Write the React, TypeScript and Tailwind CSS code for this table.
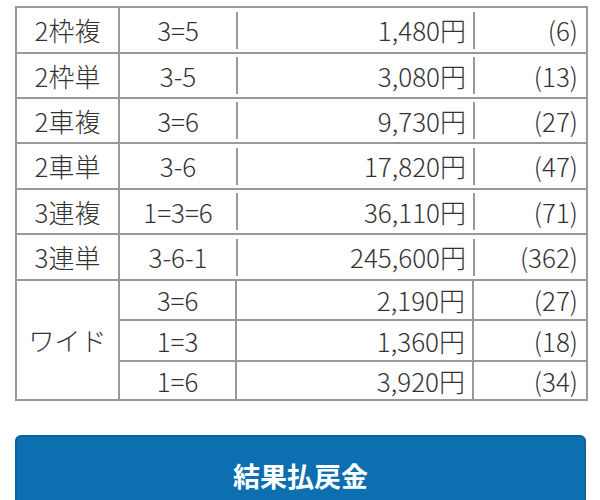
const font = "font-['Noto_Sans_CJK_JP','Noto_Sans',sans-serif]";

type Row = { type: string; combo: string; payout: string; pop: string; h: string };

const rows: Row[] = [
  { type: "2枠複", combo: "3=5", payout: "1,480円", pop: "(6)", h: "h-[46px]" },
  { type: "2枠単", combo: "3-5", payout: "3,080円", pop: "(13)", h: "h-[45px]" },
  { type: "2車複", combo: "3=6", payout: "9,730円", pop: "(27)", h: "h-[45px]" },
  { type: "2車単", combo: "3-6", payout: "17,820円", pop: "(47)", h: "h-[46px]" },
  { type: "3連複", combo: "1=3=6", payout: "36,110円", pop: "(71)", h: "h-[45px]" },
  { type: "3連単", combo: "3-6-1", payout: "245,600円", pop: "(362)", h: "h-[46px]" },
];

const wide = [
  { combo: "3=6", payout: "2,190円", pop: "(27)", h: "h-[40px]" },
  { combo: "1=3", payout: "1,360円", pop: "(18)", h: "h-[41px]" },
  { combo: "1=6", payout: "3,920円", pop: "(34)", h: "h-[39px]" },
];

const cell = "border-2 border-[#999] p-0";

export default function App() {
  return (
    <div className={`w-[600px] h-[500px] overflow-hidden bg-white px-[15px] pt-[6px] ${font} text-[#333]`}>
      <table className="w-[571px] border-collapse table-fixed text-[26px] font-light leading-none">
        <colgroup>
          <col className="w-[103px]" />
          <col className="w-[117px]" />
          <col className="w-[237px]" />
          <col className="w-[114px]" />
        </colgroup>
        <tbody>
          {rows.map((r) => (
            <tr key={r.type} className={r.h}>
              <td className={`${cell} text-center`}>{r.type}</td>
              <td className={`${cell} border-r-0 text-center`}>{r.combo}</td>
              <td className={`${cell} border-x-0`}>
                <div className="flex h-[37px] items-center justify-end border-l-2 border-[#999] pr-[7px]">
                  {r.payout}
                </div>
              </td>
              <td className={`${cell} border-l-0`}>
                <div className="flex h-[37px] items-center justify-end border-l-2 border-[#999] pr-[8px]">
                  {r.pop}
                </div>
              </td>
            </tr>
          ))}
          {wide.map((w, i) => (
            <tr key={w.combo} className={w.h}>
              {i === 0 && (
                <td rowSpan={3} className={`${cell} text-center`}>
                  ワイド
                </td>
              )}
              <td className={`${cell} text-center`}>{w.combo}</td>
              <td className={`${cell} text-right pr-[7px]`}>{w.payout}</td>
              <td className={`${cell} text-right pr-[8px]`}>{w.pop}</td>
            </tr>
          ))}
        </tbody>
      </table>
      <button
        type="button"
        className="mt-[34px] flex h-[84px] w-[571px] items-center justify-center rounded-[6px] border-2 border-[#0a62a0] bg-[#0b6fb0] pb-[2px] text-[27px] font-bold text-white"
      >
        結果払戻金
      </button>
    </div>
  );
}
